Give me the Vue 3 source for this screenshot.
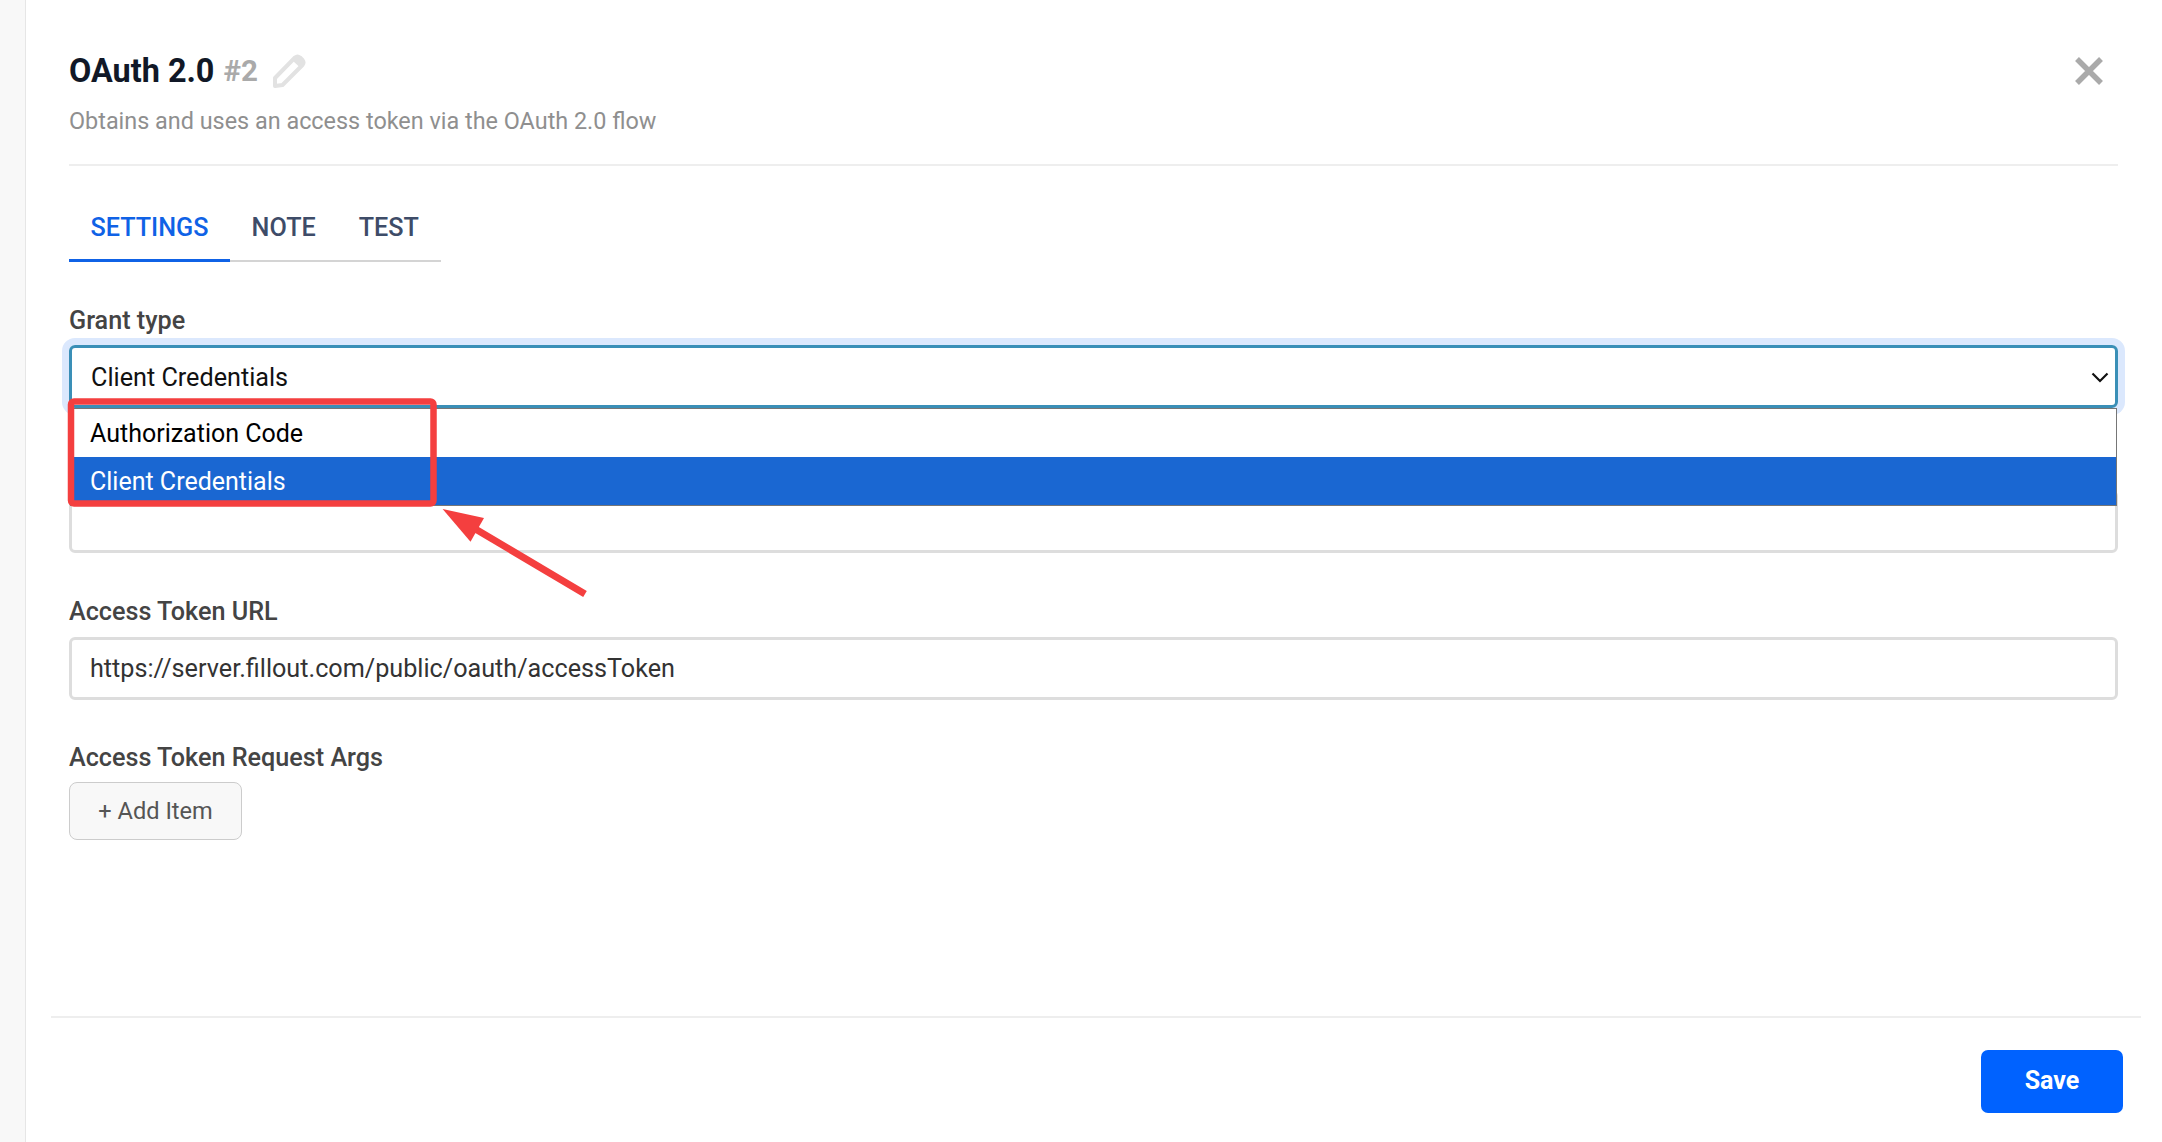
<template>
  <div class="page">
    <div class="side"></div>
    <div class="panel">
      <div class="main">
        <div class="head">
          <div class="head-text">
            <div class="title-row">
              <span class="title">OAuth 2.0</span>
              <span class="num">#2</span>
              <svg class="pencil" width="34" height="34" viewBox="0 0 34 34" fill="none">
                <path d="M3 24 L23 3.5 Q25.5 1.5 28 3.5 L30.5 6 Q32.5 8.5 30.5 11 L10.5 31 L3 32 Z" stroke="#e2e2e2" stroke-width="4" stroke-linejoin="round" />
                <path d="M23 4 Q25.5 1.5 28 3.5 L30.5 6 Q32.5 8.5 30.5 11 L28 13.5 L20.5 6.5 Z" fill="#e2e2e2" />
              </svg>
            </div>
            <div class="sub">Obtains and uses an access token via the OAuth 2.0 flow</div>
          </div>
          <svg class="close" width="28" height="28" viewBox="0 0 28 28">
            <path d="M2 2 L26 26 M26 2 L2 26" stroke="#aaaaaa" stroke-width="5.5" />
          </svg>
        </div>

        <div class="tabs">
          <div v-for="t in tabs" :key="t" :class="['tab', { active: t === 'SETTINGS' }]">{{ t }}</div>
        </div>

        <div class="field grant">
          <label class="label">Grant type</label>
          <div class="select">
            <span>Client Credentials</span>
            <svg width="18" height="11" viewBox="0 0 18 11" fill="none">
              <path d="M1.5 1.5 L9 9 L16.5 1.5" stroke="#111" stroke-width="2.2" />
            </svg>
          </div>
          <div class="menu">
            <div v-for="o in options" :key="o" :class="['opt', { sel: o === 'Client Credentials' }]">{{ o }}</div>
          </div>
        </div>

        <div class="input hidden-input"></div>

        <div class="field url">
          <label class="label">Access Token URL</label>
          <div class="input">https://server.fillout.com/public/oauth/accessToken</div>
        </div>

        <div class="field args">
          <label class="label">Access Token Request Args</label>
          <button class="add">+ Add Item</button>
        </div>
      </div>

      <div class="foot">
        <button class="save">Save</button>
      </div>
    </div>

    <!-- red annotation drawn over the screenshot -->
    <svg class="mark" width="2162" height="1142" viewBox="0 0 2162 1142" fill="none">
      <rect x="71" y="401.5" width="362.5" height="102" rx="3" stroke="#f43f3f" stroke-width="6.5" />
      <path d="M585 594 L472 527" stroke="#f43f3f" stroke-width="7" />
      <path d="M442.6 509 L484 518 L470.5 541.7 Z" fill="#f43f3f" />
    </svg>
  </div>
</template>

<script setup>
const tabs = ['SETTINGS', 'NOTE', 'TEST'];
const options = ['Authorization Code', 'Client Credentials'];
</script>

<style>
html, body { margin: 0; background: #fff; }
</style>

<style scoped>
.page {
  position: relative;
  display: flex;
  width: 2162px;
  height: 1142px;
  overflow: hidden;
  font-family: Roboto, "Liberation Sans", sans-serif;
  background: #fff;
}

.side {
  width: 25px;
  flex-shrink: 0;
  background: #f8f8f8;
  border-right: 1px solid #e6e6e6;
}

.panel {
  flex: 1;
  display: flex;
  flex-direction: column;
  min-width: 0;
}

.main {
  flex: 1;
  padding: 0 44px 0 43px;
}

.head {
  display: flex;
  justify-content: space-between;
  height: 166px;
  box-sizing: border-box;
  border-bottom: 2px solid #eeeeee;
}

.title-row {
  display: flex;
  align-items: center;
  height: 34px;
  margin-top: 54px;
}

.title {
  font-size: 32.4px;
  font-weight: 700;
  color: #111827;
}

.num {
  font-size: 29.5px;
  font-weight: 700;
  color: #aaaaaa;
  margin-left: 9px;
}

.pencil { margin-left: 14px; }

.sub {
  font-size: 23.4px;
  color: #8f8f8f;
  margin-top: 19px;
}

.close {
  margin-top: 57px;
  margin-right: 15px;
}

.tabs {
  display: flex;
  width: 372px;
  height: 96px;
  box-sizing: border-box;
  border-bottom: 2px solid #d4d4d4;
  align-items: flex-end;
}

.tab {
  padding: 0 21.5px 16px;
  font-size: 25.2px;
  font-weight: 500;
  line-height: 30px;
  color: #3e4c68;
  margin-bottom: -2px;
  border-bottom: 3px solid transparent;
}

.tab.active {
  color: #0f62e6;
  border-bottom-color: #0f62e6;
}

.field { position: relative; }

.label {
  display: block;
  font-size: 25.2px;
  font-weight: 500;
  line-height: 28px;
  color: #444444;
}

.grant { margin-top: 45px; }
.grant .label { margin-bottom: 10px; }

.select {
  display: flex;
  align-items: center;
  justify-content: space-between;
  box-sizing: border-box;
  height: 63px;
  padding: 2px 6px 0 19px;
  border: 3px solid #3a8fb7;
  border-radius: 6px;
  box-shadow: 0 0 0 7px #dbe8fd;
  font-size: 25.2px;
  color: #111;
}

.menu {
  position: absolute;
  left: 1px;
  right: 1px;
  top: 101px;
  border: 1px solid #767676;
  background: #fff;
  z-index: 2;
}

.opt {
  height: 48px;
  line-height: 50px;
  padding-left: 19px;
  font-size: 25px;
  color: #000;
}

.opt.sel {
  background: #1a67d2;
  color: #fff;
}

.input {
  box-sizing: border-box;
  height: 63px;
  padding-left: 18px;
  line-height: 57px;
  border: 3px solid #dddddd;
  border-radius: 6px;
  font-size: 25.2px;
  color: #333;
}

.hidden-input { margin-top: 82px; }

.url { margin-top: 45px; }
.url .label { margin-bottom: 11px; }

.args { margin-top: 44px; }
.args .label { margin-bottom: 10px; }

.add {
  width: 173px;
  height: 58px;
  border: 1px solid #cccccc;
  border-radius: 8px;
  background: #f8f8f8;
  font-family: inherit;
  font-size: 23.6px;
  color: #555555;
}

.foot {
  display: flex;
  justify-content: flex-end;
  height: 126px;
  box-sizing: border-box;
  margin: 0 21px 0 25px;
  padding: 32px 18px 0 0;
  border-top: 2px solid #eeeeee;
}

.save {
  width: 142px;
  height: 63px;
  padding-bottom: 3px;
  border: none;
  border-radius: 7px;
  background: #0062ff;
  font-family: inherit;
  font-size: 25px;
  font-weight: 700;
  color: #fff;
}

.mark {
  position: absolute;
  left: 0;
  top: 0;
  z-index: 5;
  pointer-events: none;
}
</style>
